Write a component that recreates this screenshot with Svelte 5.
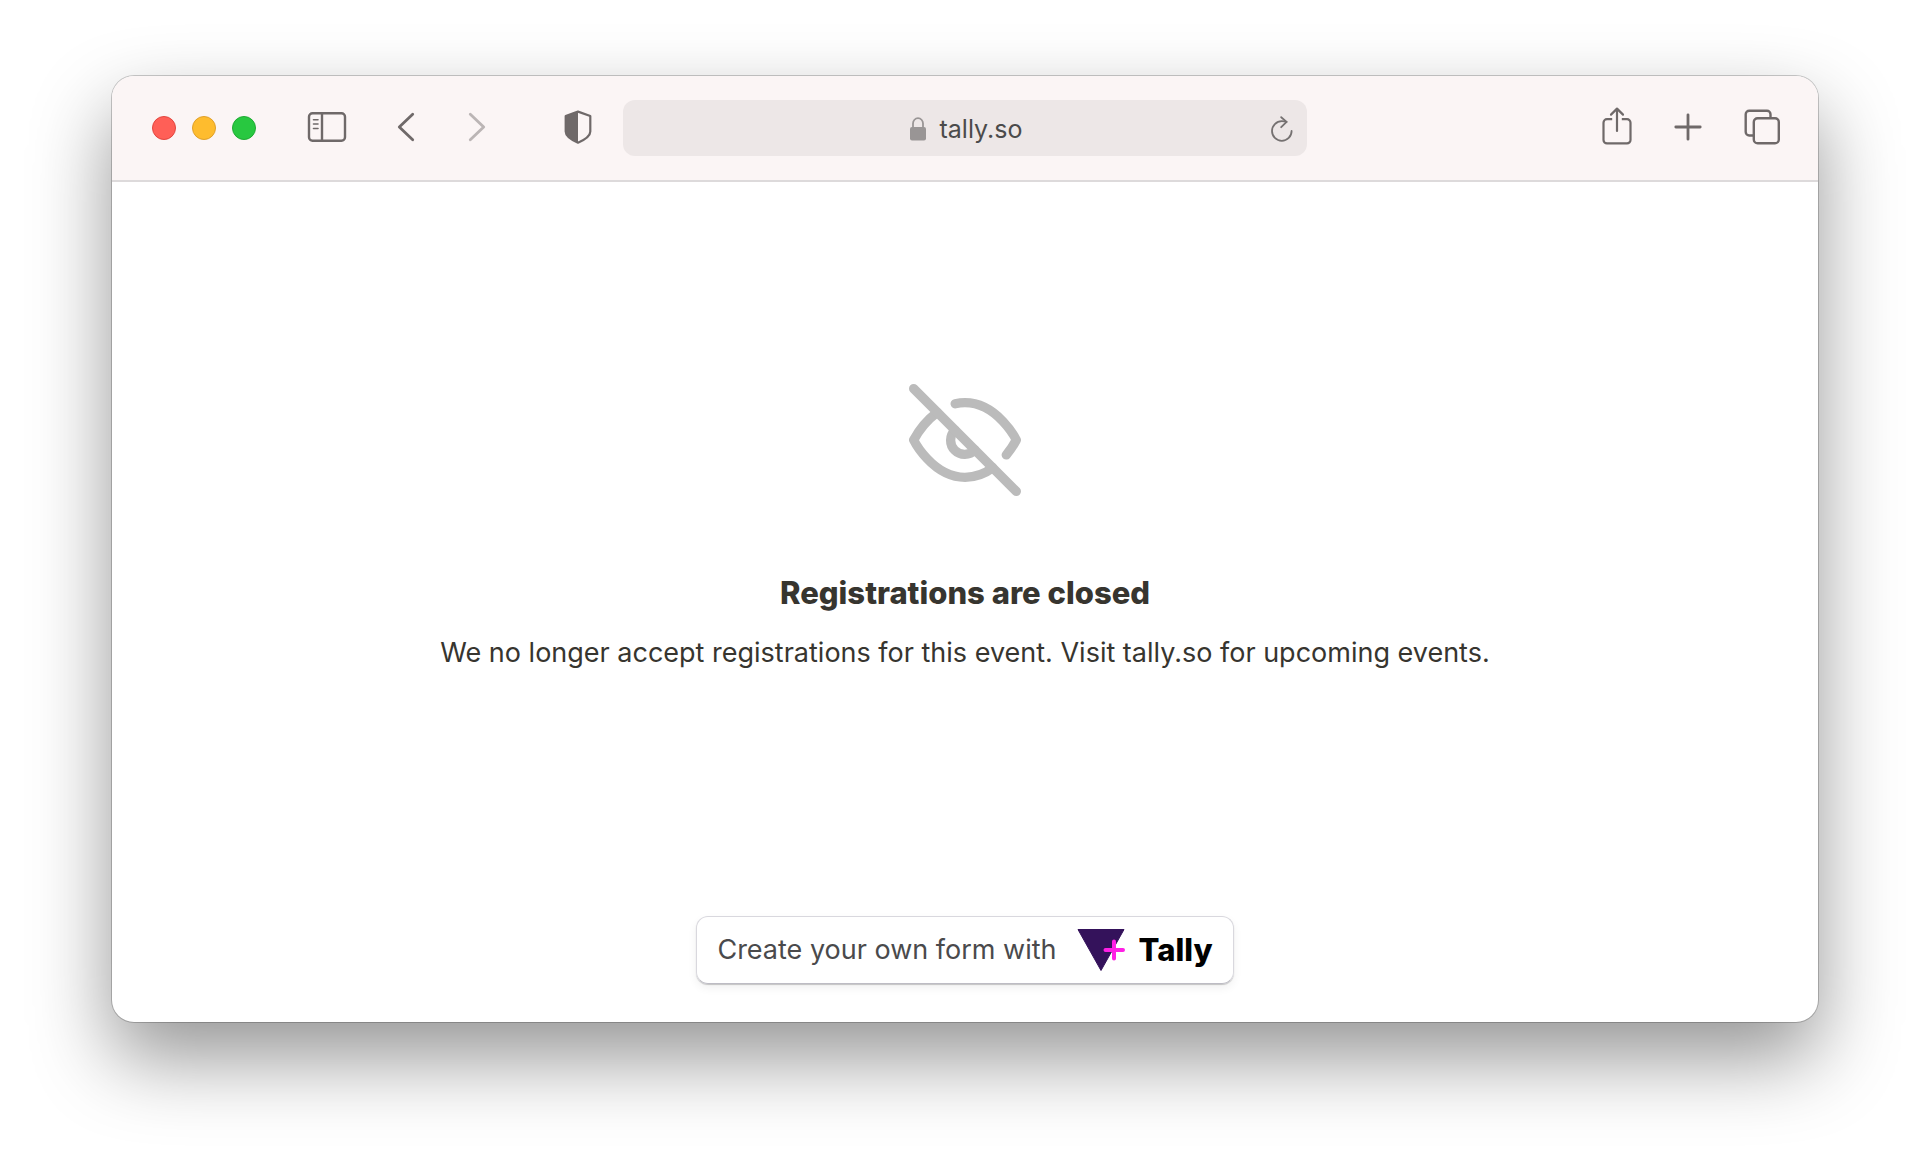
<script>
  let address = 'tally.so';
  let title = 'Registrations are closed';
  let message = 'We no longer accept registrations for this event. Visit tally.so for upcoming events.';
</script>

<div class="desktop">
  <div class="window">
    <header class="toolbar">
      <div class="tools">
        <div class="lights">
          <button class="light red" aria-label="Close"></button>
          <button class="light yellow" aria-label="Minimize"></button>
          <button class="light green" aria-label="Zoom"></button>
        </div>
        <button class="icon sidebar" aria-label="Show sidebar">
          <svg width="40" height="32" viewBox="0 0 40 32" fill="none" stroke="currentColor" stroke-width="2.4">
            <rect x="2" y="2.2" width="36" height="27.6" rx="3.5" />
            <path d="M15 2v28" />
            <path d="M6.500 8.800h4.500M6.500 13h4.500M6.500 17.500h4.500" stroke-width="1.600" stroke-linecap="round" />
          </svg>
        </button>
        <div class="history">
          <button class="icon" aria-label="Back">
            <svg width="18" height="30" viewBox="0 0 18 30" fill="none" stroke="currentColor" stroke-width="2.800" stroke-linecap="round" stroke-linejoin="round">
              <path d="M15.700 2.200 2.300 15l13.400 12.800" />
            </svg>
          </button>
          <button class="icon" aria-label="Forward" disabled>
            <svg width="18" height="30" viewBox="0 0 18 30" fill="none" stroke="currentColor" stroke-width="2.800" stroke-linecap="round" stroke-linejoin="round">
              <path d="M2.300 2.200 15.700 15 2.300 27.800" />
            </svg>
          </button>
        </div>
        <button class="icon shield" aria-label="Privacy report">
          <svg width="28" height="34" viewBox="0 0 28 34">
            <path d="M14 1.600 26.300 6v15.500c0 4.500-4.500 7.800-12.300 11.200C6.200 29.300 1.700 26 1.700 21.500V6z" fill="none" stroke="currentColor" stroke-width="2.200" stroke-linejoin="round" />
            <path d="M14 1.600v31.100C6.200 29.300 1.700 26 1.700 21.500V6z" fill="currentColor" />
          </svg>
        </button>
      </div>

      <div class="address">
        <div class="site">
          <svg width="16" height="24" viewBox="0 0 16 24">
            <path d="M3 11V6.500a5 5.300 0 0 1 10 0V11" fill="none" stroke="currentColor" stroke-width="1.800" />
            <rect y="10" width="16" height="13.500" rx="2" fill="currentColor" />
          </svg>
          <span>{address}</span>
        </div>
        <button class="icon reload" aria-label="Reload">
          <svg width="22" height="26" viewBox="0 0 22 26" fill="none" stroke="currentColor" stroke-width="1.800" stroke-linecap="round" stroke-linejoin="round">
            <path d="M20.600 15A9.800 9.800 0 1 1 10.800 5.200c1.700 0 3.300.2 4.800.6" />
            <path d="M10.200 1.200l5.400 4.700-5.400 5.300" />
          </svg>
        </button>
      </div>

      <div class="tools actions">
        <button class="icon share" aria-label="Share">
          <svg width="30" height="38" viewBox="0 0 30 38" fill="none" stroke="currentColor" stroke-width="2.200" stroke-linecap="round" stroke-linejoin="round">
            <path d="M10.200 12.200H5A3.500 3.500 0 0 0 1.500 15.700v17.200A3.500 3.500 0 0 0 5 36.400h20a3.500 3.500 0 0 0 3.500-3.500V15.700A3.500 3.500 0 0 0 25 12.200h-5.200" stroke-linecap="butt" />
            <path d="M15 24V1.600M9 7.600l6-6 6 6" />
          </svg>
        </button>
        <button class="icon" aria-label="New tab">
          <svg width="28" height="28" viewBox="0 0 28 28" fill="none" stroke="currentColor" stroke-width="2.800" stroke-linecap="round">
            <path d="M14 1.800v24.400M1.800 14h24.400" />
          </svg>
        </button>
        <button class="icon" aria-label="Tab overview">
          <svg width="36" height="36" viewBox="0 0 36 36" fill="none" stroke="currentColor" stroke-width="2.400">
            <path d="M9.500 26.500H5.200a3.500 3.500 0 0 1-3.500-3.500V5.200a3.500 3.500 0 0 1 3.500-3.500H23a3.500 3.500 0 0 1 3.500 3.500v4" />
            <rect x="9.800" y="9.200" width="25" height="25" rx="3.800" />
          </svg>
        </button>
      </div>
    </header>

    <main class="page">
      <div class="closed">
        <svg width="112" height="112" viewBox="0 0 24 24" fill="none" stroke="#bbbbbb" stroke-width="2" stroke-linecap="round" stroke-linejoin="round" aria-hidden="true">
          <path d="M17.940 17.940A10.070 10.070 0 0 1 12 20c-7 0-11-8-11-8a18.450 18.450 0 0 1 5.060-5.940M9.900 4.240A9.120 9.120 0 0 1 12 4c7 0 11 8 11 8a18.500 18.500 0 0 1-2.160 3.190m-6.720-1.070a3 3 0 1 1-4.240-4.240" />
          <path d="M1 1l22 22" />
        </svg>
        <h1>{title}</h1>
        <p>{message}</p>
      </div>

      <a class="badge" href="#tally">
        <span>Create your own form with</span>
        <span class="brand">
          <svg width="48" height="42" viewBox="0 0 48 42" aria-hidden="true">
            <path d="M1 .5h46L24 41.500z" fill="#34125b" stroke="#34125b" stroke-linejoin="round" />
            <path d="M37 12.500v17M28.500 21h17.500" stroke="#ff1fe5" stroke-width="4" stroke-linecap="round" />
          </svg>
          <strong>Tally</strong>
        </span>
      </a>
    </main>
  </div>
</div>

<style>
  :global(body) {
    margin: 0;
    background: #fff;
  }
  .desktop {
    display: flex;
    box-sizing: border-box;
    min-height: 100vh;
    padding: 76px 112px 148px;
    overflow: hidden;
    font-family: Inter, "Liberation Sans", sans-serif;
  }
  .window {
    flex: 1;
    display: flex;
    flex-direction: column;
    border-radius: 22px;
    background: #fff;
    box-shadow: 0 0 0 1px rgba(0, 0, 0, 0.2), 0 36px 80px rgba(0, 0, 0, 0.42);
  }
  .toolbar {
    display: grid;
    grid-template-columns: 1fr minmax(0, 684px) 1fr;
    align-items: center;
    height: 104px;
    border-bottom: 2px solid #dddadb;
    border-radius: 22px 22px 0 0;
    background: #fbf5f5;
    color: #6f6969;
  }
  .tools {
    display: flex;
    align-items: center;
    padding: 0 31px 0 40px;
  }
  .lights {
    display: flex;
    gap: 16px;
  }
  .light {
    width: 24px;
    height: 24px;
    padding: 0;
    border: 1px solid;
    border-radius: 50%;
  }
  .red {
    border-color: #e2463f;
    background: #ff5f57;
  }
  .yellow {
    border-color: #e0a02a;
    background: #febc2e;
  }
  .green {
    border-color: #1fab33;
    background: #28c840;
  }
  .icon {
    padding: 0 0 2px;
    border: 0;
    background: none;
    color: inherit;
  }
  .icon:disabled {
    opacity: 0.45;
  }
  svg {
    display: block;
  }
  .sidebar {
    margin-left: 51px;
  }
  .history {
    display: flex;
    gap: 53px;
    margin-left: 50px;
  }
  .shield {
    margin-left: auto;
  }
  .share {
    padding-bottom: 4px;
  }
  .address {
    display: flex;
    align-items: center;
    box-sizing: border-box;
    height: 56px;
    padding-top: 2px;
    border-radius: 12px;
    background: #ede7e7;
  }
  .site {
    flex: 1;
    display: flex;
    justify-content: center;
    align-items: center;
    gap: 14px;
    padding-left: 38px;
    font-size: 25px;
    line-height: 32px;
    color: #4b4b4b;
  }
  .site svg {
    color: #999595;
  }
  .reload {
    margin-right: 14px;
    padding: 0;
    color: #757171;
  }
  .actions {
    justify-content: flex-end;
    gap: 42px;
    padding: 0 38px 0 0;
  }
  .page {
    flex: 1;
    display: flex;
    flex-direction: column;
    align-items: center;
    padding: 0 40px 38px;
    color: #37352f;
  }
  .closed {
    flex: 1;
    display: flex;
    flex-direction: column;
    justify-content: center;
    align-items: center;
    padding-bottom: 42px;
    text-align: center;
  }
  h1 {
    margin: 77px 0 0;
    font-size: 31px;
    line-height: 40px;
    font-weight: 800;
  }
  p {
    margin: 20px 0 0;
    font-size: 27px;
    line-height: 40px;
  }
  .badge {
    display: flex;
    align-items: center;
    gap: 20px;
    padding: 12px 20px;
    border: 1px solid #d9d8de;
    border-bottom-color: #bdbcc4;
    border-radius: 12px;
    box-shadow: 0 1px 1px rgba(0, 0, 0, 0.2), 0 4px 10px rgba(0, 0, 0, 0.06);
    font-size: 27px;
    line-height: 40px;
    color: #4a4a4c;
    text-decoration: none;
  }
  .brand {
    display: flex;
    align-items: center;
    gap: 14px;
    color: #000;
  }
  strong {
    font-size: 31px;
    font-weight: 800;
  }
</style>
